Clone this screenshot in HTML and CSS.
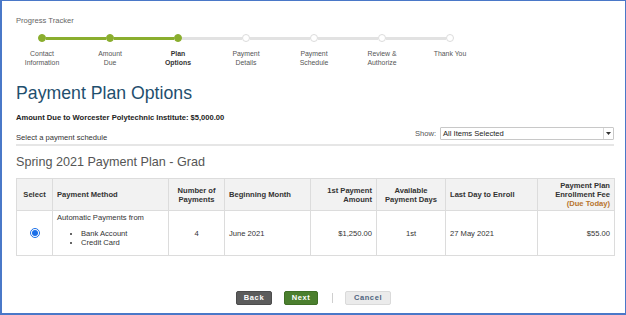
FILE: index.html
```html
<!DOCTYPE html>
<html>
<head>
<meta charset="utf-8">
<link rel="stylesheet" href="styles.css">
</head>
<body>
<div class="page">
  <div class="tracker-title">Progress Tracker</div>
  <div class="tracker">
    <div class="step done">
      <div class="track"><span class="seg none"></span><span class="dot"></span><span class="seg on"></span></div>
      <div class="label">Contact<br>Information</div>
    </div>
    <div class="step done">
      <div class="track"><span class="seg on"></span><span class="dot"></span><span class="seg on"></span></div>
      <div class="label">Amount<br>Due</div>
    </div>
    <div class="step done current">
      <div class="track"><span class="seg on"></span><span class="dot"></span><span class="seg"></span></div>
      <div class="label">Plan<br>Options</div>
    </div>
    <div class="step">
      <div class="track"><span class="seg"></span><span class="dot"></span><span class="seg"></span></div>
      <div class="label">Payment<br>Details</div>
    </div>
    <div class="step">
      <div class="track"><span class="seg"></span><span class="dot"></span><span class="seg"></span></div>
      <div class="label">Payment<br>Schedule</div>
    </div>
    <div class="step">
      <div class="track"><span class="seg"></span><span class="dot"></span><span class="seg"></span></div>
      <div class="label">Review &amp;<br>Authorize</div>
    </div>
    <div class="step">
      <div class="track"><span class="seg"></span><span class="dot"></span><span class="seg none"></span></div>
      <div class="label">Thank You</div>
    </div>
  </div>

  <h1 class="title">Payment Plan Options</h1>
  <div class="amount">Amount Due to Worcester Polytechnic Institute: $5,000.00</div>

  <div class="filter-row">
    <span class="hint">Select a payment schedule</span>
    <div class="show">
      <span class="show-label">Show:</span>
      <div class="fake-select">
        <span class="fs-text">All Items Selected</span>
        <span class="fs-arrow"><svg width="5" height="3" viewBox="0 0 5 3"><path d="M0 0H5L2.5 3Z" fill="#333"/></svg></span>
      </div>
    </div>
  </div>

  <h2 class="plan-title">Spring 2021 Payment Plan - Grad</h2>

  <table class="plans">
    <colgroup>
      <col class="c1"><col class="c2"><col class="c3"><col class="c4"><col class="c5"><col class="c6"><col class="c7"><col class="c8">
    </colgroup>
    <thead>
      <tr>
        <th class="center">Select</th>
        <th class="left">Payment Method</th>
        <th class="center">Number of<br>Payments</th>
        <th class="left">Beginning Month</th>
        <th class="right">1st Payment<br>Amount</th>
        <th class="center">Available<br>Payment Days</th>
        <th class="left">Last Day to Enroll</th>
        <th class="right">Payment Plan<br>Enrollment Fee<br><span class="due">(Due Today)</span></th>
      </tr>
    </thead>
    <tbody>
      <tr>
        <td class="center"><input type="radio" name="plan" checked class="radio"></td>
        <td class="left method">Automatic Payments from
          <ul>
            <li>Bank Account</li>
            <li>Credit Card</li>
          </ul>
        </td>
        <td class="center">4</td>
        <td class="left">June 2021</td>
        <td class="right">$1,250.00</td>
        <td class="center">1st</td>
        <td class="left">27 May 2021</td>
        <td class="right">$55.00</td>
      </tr>
    </tbody>
  </table>

  <div class="actions">
    <button class="btn back">Back</button>
    <button class="btn next">Next</button>
    <span class="sep"></span>
    <button class="btn cancel">Cancel</button>
  </div>
</div>
</body>
</html>
```

FILE: styles.css
```css
* { box-sizing: border-box; }
html, body { margin: 0; padding: 0; }
body {
  font-family: "Liberation Sans", Arial, sans-serif;
  color: #333;
  background: #fff;
}
.page {
  width: 626px;
  height: 315px;
  border: 1px solid #4a78c8;
  border-left-width: 2px;
  border-bottom-width: 2px;
  padding: 14px 11px 0 14px;
  overflow: hidden;
}
.tracker-title {
  font-size: 7.6px;
  line-height: 11px;
  color: #666;
}
.tracker {
  display: flex;
  margin: 8px 0 0 -8px;
}
.step {
  width: 68px;
  display: flex;
  flex-direction: column;
  align-items: center;
}
.track {
  width: 100%;
  height: 8px;
  display: flex;
  align-items: center;
}
.seg {
  flex: 1;
  height: 3px;
  background: #e2e2e2;
}
.seg.on { background: #8aae2e; }
.seg.none { background: transparent; }
.dot {
  width: 8px;
  height: 8px;
  border-radius: 50%;
  background: #fff;
  border: 1.5px solid #dcdcdc;
  flex: none;
}
.step.done .dot {
  background: #8aae2e;
  border-color: #8aae2e;
}
.label {
  margin-top: 7px;
  font-size: 6.9px;
  line-height: 9px;
  color: #555;
  text-align: center;
}
.step.current .label {
  font-weight: bold;
  color: #333;
}
.title {
  margin: 15px 0 0;
  font-size: 17.7px;
  line-height: 22px;
  font-weight: normal;
  color: #1f4f6e;
}
.amount {
  margin-top: 8px;
  font-size: 7.6px;
  line-height: 11px;
  font-weight: bold;
  color: #222;
}
.filter-row {
  margin-top: 4px;
  display: flex;
  justify-content: space-between;
  align-items: flex-end;
  padding-bottom: 1px;
  border-bottom: 2px solid #e6e6e6;
}
.hint {
  font-size: 7.6px;
  line-height: 10px;
  color: #333;
}
.show {
  display: flex;
  align-items: center;
  margin-bottom: 3px;
}
.show-label {
  font-size: 7.6px;
  color: #555;
  margin-right: 4px;
}
.fake-select {
  width: 174px;
  height: 13px;
  border: 1px solid #c8c8c8;
  border-radius: 1px;
  display: flex;
  align-items: center;
  background: #fff;
}
.fs-text {
  flex: 1;
  font-size: 7.6px;
  color: #222;
  padding-left: 2px;
}
.fs-arrow {
  width: 10px;
  height: 100%;
  border-left: 1px solid #d8d8d8;
  display: flex;
  align-items: center;
  justify-content: center;
}
.plan-title {
  margin: 8px 0 0;
  font-size: 12.6px;
  line-height: 16px;
  font-weight: normal;
  color: #555;
}
.plans {
  margin-top: 8px;
  width: 598px;
  border-collapse: collapse;
  table-layout: fixed;
  font-size: 7.6px;
}
.c1 { width: 36px; }
.c2 { width: 116px; }
.c3 { width: 56px; }
.c4 { width: 86px; }
.c5 { width: 66px; }
.c6 { width: 69px; }
.c7 { width: 92px; }
.c8 { width: 77px; }
.plans th, .plans td {
  border: 1px solid #dcdcdc;
  padding: 2px 4px;
  line-height: 9px;
}
.plans th {
  background: #f2f2f2;
  font-weight: bold;
  color: #333;
  height: 31px;
  vertical-align: middle;
}
.plans td {
  height: 45px;
  vertical-align: middle;
  color: #333;
}
.plans td.method {
  vertical-align: top;
  padding-top: 2px;
}
.method ul {
  margin: 7px 0 0;
  padding-left: 24px;
}
.left { text-align: left; }
.right { text-align: right; }
.center { text-align: center; }
.due { color: #b8752f; }
.radio {
  width: 10px;
  height: 10px;
  margin: 0;
  vertical-align: middle;
  accent-color: #1a6fe8;
}
.actions {
  margin-top: 35px;
  display: flex;
  justify-content: center;
  align-items: center;
  padding-right: 3px;
}
.btn {
  height: 14px;
  padding: 0;
  border-radius: 2px;
  font-family: "Liberation Sans", Arial, sans-serif;
  font-size: 7.5px;
  font-weight: bold;
  letter-spacing: 0.6px;
  line-height: 12px;
  cursor: pointer;
}
.back {
  width: 36px;
  background: #5c5c5c;
  border: 1px solid #4c4c4c;
  color: #fff;
}
.next {
  width: 34px;
  margin-left: 12px;
  background: #4b7f2e;
  border: 1px solid #3f6f25;
  color: #fff;
}
.sep {
  width: 1px;
  height: 10px;
  background: #cfcfcf;
  margin: 0 12px 0 14px;
}
.cancel {
  width: 46px;
  background: #ebebeb;
  border: 1px solid #dadada;
  color: #4d6380;
}
```
